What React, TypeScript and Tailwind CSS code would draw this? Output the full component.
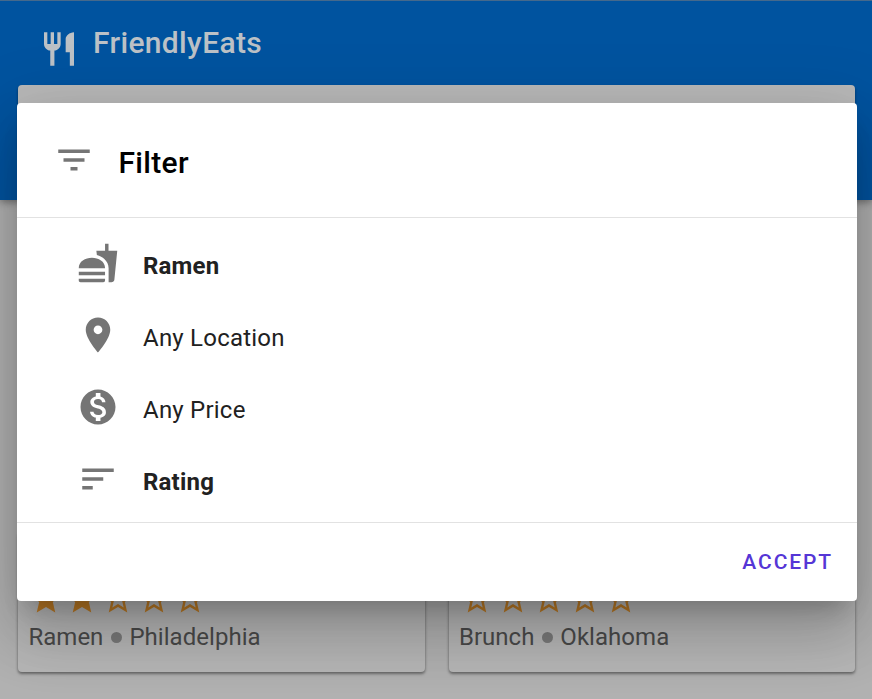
import React from 'react';

const icons = {
  restaurant:
    'M11 9H9V2H7v7H5V2H3v7c0 2.12 1.66 3.84 3.75 3.97V22h2.5v-9.03C11.34 12.84 13 11.12 13 9V2h-2v7zm5-3v8h2.5v8H21V2c-2.76 0-5 2.24-5 4z',
  filter: 'M10 18h4v-2h-4v2zM3 6v2h18V6H3zm3 7h12v-2H6v2z',
  fastfood:
    'M18.06 22.99h1.66c.84 0 1.53-.64 1.63-1.46L23 5.05h-5V1h-1.97v4.05h-4.97l.3 2.34c1.71.47 3.31 1.32 4.27 2.26 1.44 1.42 2.43 2.89 2.43 5.29v8.05zM1 21.99V21h15.03v.99c0 .55-.45 1-1.01 1H2.01c-.56 0-1.01-.45-1.01-1zm15.03-7c0-8-15.03-8-15.03 0h15.03zM1.02 17h15v2h-15z',
  place:
    'M12 2C8.13 2 5 5.13 5 9c0 5.25 7 13 7 13s7-7.75 7-13c0-3.87-3.13-7-7-7zm0 9.5c-1.38 0-2.5-1.12-2.5-2.5s1.12-2.5 2.5-2.5 2.5 1.12 2.5 2.5-1.12 2.5-2.5 2.5z',
  money:
    'M12 2C6.48 2 2 6.48 2 12s4.48 10 10 10 10-4.48 10-10S17.52 2 12 2zm1.41 16.09V20h-2.67v-1.93c-1.71-.36-3.16-1.46-3.27-3.4h1.96c.1 1.05.82 1.87 2.65 1.87 1.96 0 2.4-.98 2.4-1.59 0-.83-.44-1.61-2.67-2.14-2.48-.6-4.18-1.62-4.18-3.67 0-1.72 1.39-2.84 3.11-3.21V4h2.67v1.95c1.86.45 2.79 1.86 2.85 3.39H14.3c-.05-1.11-.64-1.87-2.22-1.87-1.5 0-2.4.68-2.4 1.64 0 .84.65 1.39 2.67 1.91s4.18 1.39 4.18 3.91c-.01 1.83-1.38 2.83-3.12 3.16z',
  sort: 'M3 18h6v-2H3v2zM3 6v2h18V6H3zm0 7h12v-2H3v2z',
  star: 'M12 17.27L18.18 21l-1.64-7.03L22 9.24l-7.19-.61L12 2 9.19 8.63 2 9.24l5.46 4.73L5.82 21z',
  starBorder:
    'M22 9.24l-7.19-.62L12 2 9.19 8.63 2 9.24l5.46 4.73L5.82 21 12 17.27 18.18 21l-1.63-7.03L22 9.24zM12 15.4l-3.76 2.27 1-4.28-3.32-2.88 4.38-.38L12 6.1l1.71 4.04 4.38.38-3.32 2.88 1 4.28L12 15.4z',
};

function Icon({ name, className }: { name: keyof typeof icons; className: string }) {
  return (
    <svg viewBox="0 0 24 24" fill="currentColor" className={`shrink-0 ${className}`}>
      <path d={icons[name]} />
    </svg>
  );
}

function RestaurantCard({ kind, city, rating }: { kind: string; city: string; rating: number }) {
  return (
    <article className="flex h-[140px] flex-1 flex-col rounded bg-[#b7b7b7] pl-[10.5px] pt-[49px] shadow-[0_2px_3px_rgba(0,0,0,0.4),0_0_3px_rgba(0,0,0,0.12)]">
      <div className="flex text-[#bf7c26]">
        {[1, 2, 3, 4, 5].map((n) => (
          <Icon key={n} name={n <= rating ? 'star' : 'starBorder'} className="-ml-[0.1px] mr-[0.1px] size-9" />
        ))}
      </div>
      <div className="mt-1 flex h-8 items-center text-2xl text-[#4a4a4a]">
        <span>{kind}</span>
        <span className="mx-[7.5px] mt-px size-[11px] rounded-full bg-[#7a7a7a]" />
        <span className="tracking-[0.04px]">{city}</span>
      </div>
    </article>
  );
}

const filters: { icon: keyof typeof icons; label: string; active: boolean }[] = [
  { icon: 'fastfood', label: 'Ramen', active: true },
  { icon: 'place', label: 'Any Location', active: false },
  { icon: 'money', label: 'Any Price', active: false },
  { icon: 'sort', label: 'Rating', active: true },
];

export default function App() {
  return (
    <div className="relative h-[699px] w-[872px] overflow-hidden bg-[#b1b1b1] font-[Roboto,sans-serif]">
      <header className="h-[200px] border-t border-[#45698c] bg-[#00539f] shadow-[0_2px_8px_rgba(0,0,0,0.4)]">
        <div className="flex h-[84px] items-start pl-[38.5px] pt-[22px] text-[#bcc1c6]">
          <Icon name="restaurant" className="mt-[6px] size-10" />
          <h1 className="ml-[14.5px] text-[30px] font-medium leading-10 tracking-[0.34px]">FriendlyEats</h1>
        </div>
        <div className="ml-[18px] h-16 w-[837px] rounded bg-[#b9b9b9] shadow-[0_2px_3px_rgba(0,0,0,0.4)]" />
      </header>
      <main className="flex gap-6 pl-[18px] pr-[17px] pt-[332px]">
        <RestaurantCard kind="Ramen" city="Philadelphia" rating={2} />
        <RestaurantCard kind="Brunch" city="Oklahoma" rating={0} />
      </main>

      <section
        role="dialog"
        className="absolute left-[17px] top-[103px] flex h-[498px] w-[840px] flex-col rounded bg-white shadow-[0_16px_22px_-10px_rgba(0,0,0,0.2),0_36px_57px_4px_rgba(0,0,0,0.14),0_14px_69px_12px_rgba(0,0,0,0.12)]"
      >
        <div className="flex h-[115px] items-start border-b-[1.5px] border-[#e2e2e2] pl-[35.5px] pt-[35.5px]">
          <Icon name="filter" className="size-[42px] text-[#757575]" />
          <h2 className="ml-6 mt-1 text-[30px] font-medium leading-10 tracking-[0.3px] text-black">Filter</h2>
        </div>
        <ul className="flex h-[304px] flex-col pl-[60px] pt-3">
          {filters.map((f) => (
            <li key={f.icon} className="flex h-[72px] items-center">
              <Icon name={f.icon} className="-mt-[7px] size-[42px] text-[#757575]" />
              <span
                className={`ml-6 text-2xl text-[#212121] ${f.active ? 'font-bold tracking-[0.2px]' : 'font-normal tracking-[0.22px]'}`}
              >
                {f.label}
              </span>
            </li>
          ))}
        </ul>
        <div className="flex flex-1 items-center justify-end border-t-[1.5px] border-[#e2e2e2] pr-6">
          <button className="text-[21px] font-medium leading-8 tracking-[1.9px] text-[#5536d6]">ACCEPT</button>
        </div>
      </section>
    </div>
  );
}
